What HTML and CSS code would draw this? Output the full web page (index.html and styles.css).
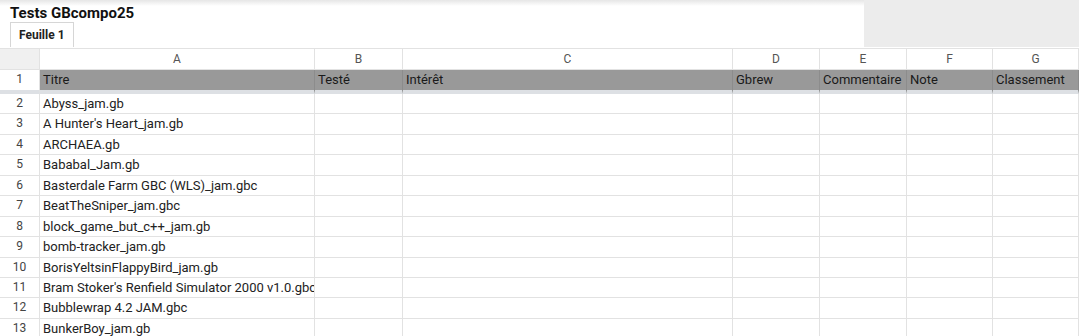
FILE: index.html
```html
<!DOCTYPE html>
<html lang="fr">
<head>
  <meta charset="UTF-8" />
  <title>Tests GBcompo25</title>
  <link rel="stylesheet" href="styles.css">
</head>
<body>
  <header class="entete">
    <div class="doc">
      <div class="titre">Tests GBcompo25</div>
      <div class="onglet">Feuille 1</div>
    </div>
    <div class="bloc-gris"></div>
  </header>

  <div class="feuille">
    <!-- lettres de colonnes -->
    <div class="coin"></div>
    <div class="col">A</div>
    <div class="col">B</div>
    <div class="col">C</div>
    <div class="col">D</div>
    <div class="col">E</div>
    <div class="col">F</div>
    <div class="col">G</div>

    <!-- ligne figée -->
    <div class="num fige">1</div>
    <div class="cell entete-col fige">Titre</div>
    <div class="cell entete-col fige">Testé</div>
    <div class="cell entete-col fige">Intérêt</div>
    <div class="cell entete-col fige">Gbrew</div>
    <div class="cell entete-col fige">Commentaire</div>
    <div class="cell entete-col fige">Note</div>
    <div class="cell entete-col fige">Classement</div>
  </div>

  <div class="feuille" id="lignes"></div>

  <script>
    const jeux = [
      "Abyss_jam.gb",
      "A Hunter's Heart_jam.gb",
      "ARCHAEA.gb",
      "Bababal_Jam.gb",
      "Basterdale Farm GBC (WLS)_jam.gbc",
      "BeatTheSniper_jam.gbc",
      "block_game_but_c++_jam.gb",
      "bomb-tracker_jam.gb",
      "BorisYeltsinFlappyBird_jam.gb",
      "Bram Stoker's Renfield Simulator 2000 v1.0.gbc",
      "Bubblewrap 4.2 JAM.gbc",
      "BunkerBoy_jam.gb"
    ];
    const lignes = document.getElementById("lignes");
    jeux.forEach((nom, i) => {
      let html = '<div class="num">' + (i + 2) + '</div>';
      html += '<div class="cell">' + nom.replace(/&/g, "&amp;") + '</div>';
      for (let c = 0; c < 6; c++) html += '<div class="cell"></div>';
      lignes.insertAdjacentHTML("beforeend", html);
    });
  </script>
</body>
</html>
```

FILE: styles.css
```css
body {
  margin: 0;
  font-family: Roboto, "Liberation Sans", Arial, sans-serif;
  background: #fff;
  color: #222;
  overflow: hidden;
}

.entete {
  display: flex;
  height: 48px;
  background: linear-gradient(#e6e6e6, #fff 6px);
}
.doc {
  flex: 1;
  padding: 5px 0 0 10px;
}
.titre {
  font-size: 15px;
  font-weight: bold;
  color: #111;
  line-height: 17px;
}
.onglet {
  display: inline-block;
  height: 25px;
  box-sizing: border-box;
  padding: 4px 8px 0 8px;
  border: 1px solid #d6d6d6;
  border-bottom: none;
  font-size: 12px;
  font-weight: bold;
  line-height: 16px;
  background: #fff;
}
.bloc-gris {
  width: 215px;
  height: 47px;
  background: #ececec;
}

.feuille {
  display: grid;
  grid-template-columns: 40px 275px 88px 330px 87px 87px 86px 1fr;
  font-size: 13px;
}
.feuille > div {
  box-sizing: border-box;
  white-space: nowrap;
  overflow: hidden;
}
.feuille:first-of-type {
  grid-template-rows: 21px 24px;
  border-top: 1px solid #e2e2e2;
}
#lignes {
  grid-auto-rows: 20.45px;
}

.coin {
  background: #f0f0f0;
  border-right: 1px solid #e2e2e2;
  border-bottom: 1px solid #e2e2e2;
}
.col {
  text-align: center;
  font-size: 12px;
  color: #555;
  line-height: 20px;
  border-right: 1px solid #e2e2e2;
  border-bottom: 1px solid #e2e2e2;
}
.num {
  text-align: center;
  font-size: 12px;
  color: #444;
  line-height: 19px;
  border-right: 1px solid #e2e2e2;
  border-bottom: 1px solid #e2e2e2;
}
.cell {
  padding-left: 3px;
  line-height: 19px;
  border-right: 1px solid #e2e2e2;
  border-bottom: 1px solid #e2e2e2;
}
.fige {
  border-bottom: 4px solid #dde0e4;
}
.entete-col {
  background: #999;
  color: #1a1a1a;
  border-right-color: #8c8c8c;
}
```
